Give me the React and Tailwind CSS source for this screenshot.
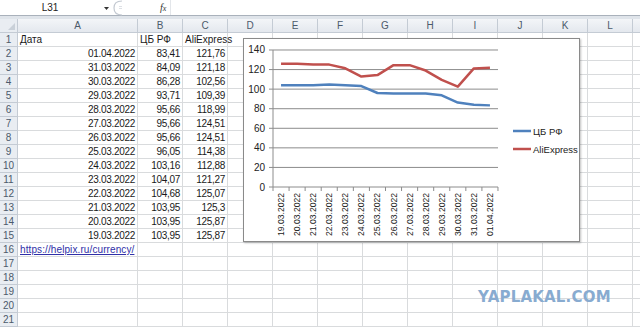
import React from "react";

const cols = ["A", "B", "C", "D", "E", "F", "G", "H", "I", "J", "K", "L"];

const data = [
  ["01.04.2022", "83,41", "121,76"],
  ["31.03.2022", "84,09", "121,18"],
  ["30.03.2022", "86,28", "102,56"],
  ["29.03.2022", "93,71", "109,39"],
  ["28.03.2022", "95,66", "118,99"],
  ["27.03.2022", "95,66", "124,51"],
  ["26.03.2022", "95,66", "124,51"],
  ["25.03.2022", "96,05", "114,38"],
  ["24.03.2022", "103,16", "112,88"],
  ["23.03.2022", "104,07", "121,27"],
  ["22.03.2022", "104,68", "125,07"],
  ["21.03.2022", "103,95", "125,3"],
  ["20.03.2022", "103,95", "125,87"],
  ["19.03.2022", "103,95", "125,87"],
];

const font = { fontFamily: '"Liberation Sans", Arial, sans-serif' };

function Chart() {
  // chart order: oldest first
  const series = [...data].reverse();
  const x = (i) => 37.04 + 16.07 * i;
  const y = (v) => 148 - v * 0.9786;
  const num = (s) => parseFloat(s.replace(",", "."));
  const cb = series.map((r, i) => `${x(i)},${y(num(r[1]))}`).join(" ");
  const ali = series.map((r, i) => `${x(i)},${y(num(r[2]))}`).join(" ");
  const ticks = [0, 20, 40, 60, 80, 100, 120, 140];

  return (
    <div className="absolute left-[243px] top-[38px] w-[337px] h-[204px] bg-white border border-[#8a8a8a] shadow-[1px_1px_2px_rgba(0,0,0,0.25)]">
      <svg width="337" height="204" className="block" style={font}>
        {ticks.map((t) => (
          <g key={t}>
            <line x1="25" x2={t === 0 ? 29 : 254} y1={y(t)} y2={y(t)} stroke="#8c8c8c" strokeWidth="1" />
            <text x="21" y={y(t) + 3.5} fontSize="10" textAnchor="end" fill="#222">{t}</text>
          </g>
        ))}
        <line x1="29" x2="29" y1={y(140)} y2="148" stroke="#8c8c8c" />
        <line x1="29" x2="254" y1="148" y2="148" stroke="#8c8c8c" />
        {Array.from({ length: 15 }).map((_, i) => (
          <line key={i} x1={29 + 16.07 * i} x2={29 + 16.07 * i} y1="148" y2="152" stroke="#8c8c8c" />
        ))}
        {series.map((r, i) => (
          <text
            key={r[0]}
            transform={`translate(${x(i) + 3},154) rotate(-90)`}
            fontSize="8.6"
            textAnchor="end"
            fill="#222"
          >
            {r[0]}
          </text>
        ))}
        <polyline points={cb} fill="none" stroke="#4f81bd" strokeWidth="2.5" strokeLinejoin="round" />
        <polyline points={ali} fill="none" stroke="#c0504d" strokeWidth="2.5" strokeLinejoin="round" />
        <line x1="269" x2="287" y1="92" y2="92" stroke="#4f81bd" strokeWidth="2.5" />
        <text x="289" y="95.5" fontSize="9.5" fill="#222">ЦБ РФ</text>
        <line x1="269" x2="287" y1="110" y2="110" stroke="#c0504d" strokeWidth="2.5" />
        <text x="289" y="113.5" fontSize="9.5" fill="#222">AliExpress</text>
      </svg>
    </div>
  );
}

function FormulaBar() {
  return (
    <div className="h-[19px] bg-[#dfe4ea]">
      <div className="h-[16px] flex items-center bg-white border-b border-[#a9b1bb] text-[10px] text-[#222]" style={font}>
        <div className="w-[100px] text-center">L31</div>
        <svg width="12" height="16" className="block">
          <path d="M4 7 L9 7 L6.5 10 Z" fill="#333" />
        </svg>
        <svg width="16" height="16" className="block">
          <path d="M10 1 C4 1 2 4 2 8 C2 12 4 15 10 15" fill="none" stroke="#c3c9d1" strokeWidth="1.2" />
          <path d="M7 6.5 h3 M7 8.5 h3" stroke="#d4d8de" strokeWidth="0.8" />
        </svg>
        <div className="w-[32px]" />
        <span className="italic font-serif text-[10px] text-[#333]" style={{ fontFamily: '"Liberation Serif", serif' }}>
          f<span className="text-[8px]">x</span>
        </span>
        <div className="ml-[4px] h-full border-l border-[#e3e6ea] flex-1" />
      </div>
    </div>
  );
}

const gridCols = "grid grid-cols-[18px_120px_repeat(11,45px)_1fr]";

function HeaderRow() {
  return (
    <div className={`${gridCols} h-[14px]`}>
      <div className="relative bg-[#e9edf2] border-r border-b border-[#c4cbd4]">
        <div className="absolute right-[2px] bottom-[2px] w-0 h-0 border-l-[7px] border-l-transparent border-b-[7px] border-b-[#c9d0d8]" />
      </div>
      {cols.map((c) => (
        <div key={c} className="bg-gradient-to-b from-[#f3f5f8] to-[#e4e8ee] border-r border-b border-[#c4cbd4] text-[10px] leading-[13px] text-center text-[#4c5a6b]">
          {c}
        </div>
      ))}
      <div className="bg-gradient-to-b from-[#f3f5f8] to-[#e4e8ee] border-b border-[#c4cbd4]" />
    </div>
  );
}

function Row({ n }) {
  const cell = "border-r border-b border-[#d9dbdd] h-[14px] text-[10px] leading-[13px] whitespace-nowrap text-[#1a1a1a]";
  let a = null, b = null, c = null;
  if (n === 1) {
    a = <span className="pl-[2px]">Дата</span>;
    b = <span className="pl-[2px]">ЦБ РФ</span>;
    c = <span className="pl-[2px]">AliExpress</span>;
  } else if (n >= 2 && n <= 15) {
    const r = data[n - 2];
    a = r[0];
    b = r[1];
    c = r[2];
  } else if (n === 16) {
    a = (
      <span className="pl-[2px] text-[10px] tracking-[0.1px] text-[#3030a8] underline">
        https://helpix.ru/currency/
      </span>
    );
  }
  const right = n >= 2 && n <= 15 ? "text-right pr-[2px] tracking-[-0.3px]" : "";
  return (
    <div className={`${gridCols} h-[14px]`}>
      <div className="bg-[#e9edf2] border-r border-b border-[#c4cbd4] text-[10px] leading-[13px] text-center text-[#4c5a6b]">{n}</div>
      <div className={`${cell} ${right} overflow-visible`}>{a}</div>
      <div className={`${cell} ${right}`}>{b}</div>
      <div className={`${cell} ${right}`}>{c}</div>
      {cols.slice(3).map((c2) => (
        <div key={c2} className={cell} />
      ))}
      <div className="border-b border-[#d9dbdd]" />
    </div>
  );
}

export default function App() {
  return (
    <div className="relative w-[640px] h-[328px] overflow-hidden bg-white" style={font}>
      <FormulaBar />
      <HeaderRow />
      {Array.from({ length: 21 }).map((_, i) => (
        <Row key={i} n={i + 1} />
      ))}
      <Chart />
      <div
        className="absolute left-[478px] top-[290px] text-[15px] font-bold tracking-[0.2px] text-[#88abd0] leading-none"
        style={{ fontFamily: '"DejaVu Sans", sans-serif' }}
      >
        YAPLAKAL.COM
      </div>
    </div>
  );
}
